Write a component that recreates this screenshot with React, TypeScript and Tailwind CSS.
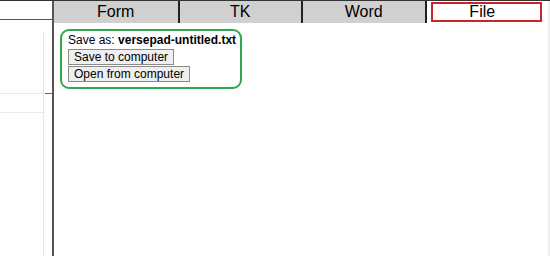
const TABS = ["Form", "TK", "Word", "File"];

export default function App() {
  const active = "File";

  return (
    <div className="flex h-[256px] w-[550px] overflow-hidden border-t border-[#333] bg-white font-['Liberation_Sans',Arial,sans-serif] text-black">
      {/* left pane, scrolled */}
      <aside className="relative w-[54px] shrink-0 border-r-2 border-[#555]">
        <div className="h-[19px] border-b border-[#555]" />
        <div className="ml-auto mt-[13px] h-[60px] w-[9px] border-l border-[#e6e6e6]" />
        <div className="flex h-px">
          <div className="w-[45px] bg-[#e8e8e8]" />
          <div className="flex-1 bg-[#666]" />
        </div>
        <div className="ml-auto h-[18px] w-[9px] border-l border-[#e6e6e6]" />
        <div className="h-px w-[45px] bg-[#ececec]" />
        <div className="ml-auto h-[200px] w-[9px] border-l border-[#e6e6e6]" />
      </aside>

      <main className="flex min-w-0 flex-1 flex-col border-r-2 border-[#eee]">
        <nav className="grid h-[20px] grid-cols-4 border-b border-black">
          {TABS.map((t, i) => (
            <div
              key={t}
              className={`flex min-w-0 items-center justify-center text-[16px] leading-[16px] ${
                i > 0 ? "border-l-2 border-[#222]" : ""
              } ${t === active ? "bg-white pb-[1px] pl-[4px] pr-[6px] pt-[1px]" : "bg-[#d0d0d0]"}`}
            >
              {t === active ? (
                <span className="flex h-full w-full items-center justify-center border-2 border-[#c8242b] pr-[8px]">
                  {t}
                </span>
              ) : (
                t
              )}
            </div>
          ))}
        </nav>

        <div className="px-[6px] pt-[8px]">
          <div className="flex w-[182px] flex-col items-start gap-[1px] whitespace-nowrap rounded-[9px] border-2 border-[#2fa84f] px-[6px] pb-[5px] pt-[2px] text-[12px] leading-[15px]">
            <div>
              Save as: <b>versepad-untitled.txt</b>
            </div>
            <button className="border border-[#8a8a8a] bg-[#efefef] px-[5px] text-[12px] leading-[14px]">
              Save to computer
            </button>
            <button className="border border-[#8a8a8a] bg-[#efefef] px-[5px] text-[12px] leading-[14px]">
              Open from computer
            </button>
          </div>
        </div>
      </main>
    </div>
  );
}
